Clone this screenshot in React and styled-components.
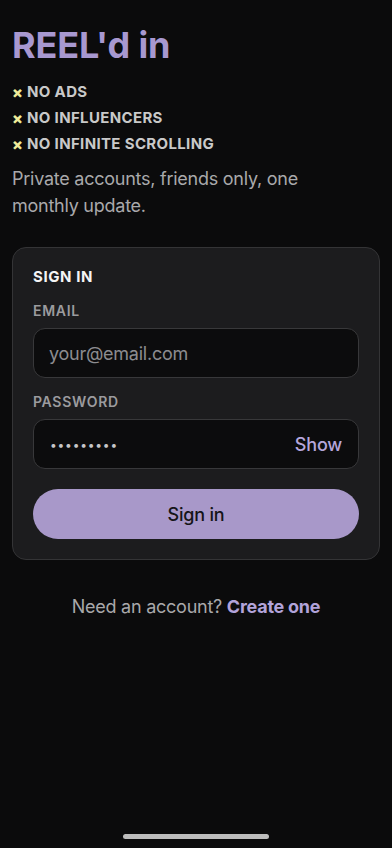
import React, { useState } from 'react'
import styled, { createGlobalStyle } from 'styled-components'

const GlobalStyle = createGlobalStyle`
  html, body {
    margin: 0;
    padding: 0;
    background: #0b0b0c;
  }
  body {
    font-family: Inter, "Noto Sans", "Liberation Sans", sans-serif;
    -webkit-font-smoothing: antialiased;
  }
  * { box-sizing: border-box; }
`

const Page = styled.div`
  min-height: 100vh;
  display: flex;
  flex-direction: column;
  padding: 24px 12px 0;
  background: #0b0b0c;
`

const Title = styled.h1`
  margin: 0;
  font-size: 36px;
  line-height: 43px;
  font-weight: 700;
  letter-spacing: -0.1px;
  color: #a898d0;
`

const NoList = styled.ul`
  list-style: none;
  margin: 12px 0 0;
  padding: 0;
`

const NoItem = styled.li`
  display: flex;
  align-items: center;
  gap: 4px;
  font-size: 15px;
  line-height: 26px;
  font-weight: 700;
  letter-spacing: 0.35px;
  color: #c9c9c9;
`

const Cross = styled.span`
  color: #efec9a;
  font-size: 16px;
  font-weight: 800;
  width: 11px;
`

const Blurb = styled.p`
  margin: 8px 0 0;
  font-size: 18px;
  line-height: 27px;
  letter-spacing: -0.25px;
  color: #a9a9ab;
  padding-right: 70px;
`

const Card = styled.form`
  margin-top: 28px;
  display: flex;
  flex-direction: column;
  padding: 19px 20px 20px;
  background: #1c1c1e;
  border: 1px solid #343436;
  border-radius: 14px;
`

const CardTitle = styled.h2`
  margin: 0 0 14px;
  font-size: 15px;
  line-height: 20px;
  font-weight: 700;
  letter-spacing: 0.6px;
  color: #f4f4f4;
`

const Field = styled.label`
  display: flex;
  flex-direction: column;
  gap: 7px;
  & + & { margin-top: 14px; }
`

const Label = styled.span`
  font-size: 14px;
  line-height: 20px;
  font-weight: 600;
  letter-spacing: 0.7px;
  color: #9b9b9e;
`

const InputBox = styled.div`
  display: flex;
  align-items: center;
  height: 50px;
  padding: 0 16px 0 15px;
  background: #0c0c0d;
  border: 1px solid #38383a;
  border-radius: 12px;
`

const Input = styled.input`
  flex: 1;
  min-width: 0;
  border: none;
  outline: none;
  background: transparent;
  font-family: inherit;
  font-size: ${p => (p.$dots ? '12px' : '18px')};
  color: ${p => (p.$dots ? '#c6c6c8' : '#eaeaea')};
  letter-spacing: ${p => (p.$dots ? '0.8px' : '-0.25px')};
  padding: 0 0 0 ${p => (p.$dots ? '1px' : '0')};
  &::placeholder { color: #8c8c90; }
`

const ShowButton = styled.button`
  border: none;
  background: transparent;
  padding: 0;
  font-family: inherit;
  font-size: 18px;
  font-weight: 500;
  letter-spacing: -0.2px;
  color: #b5a6dc;
  cursor: pointer;
`

const SubmitButton = styled.button`
  margin-top: 20px;
  height: 50px;
  border: none;
  border-radius: 25px;
  background: #a898c9;
  color: #151417;
  font-family: inherit;
  font-size: 18px;
  font-weight: 500;
  letter-spacing: -0.2px;
  cursor: pointer;
`

const Footer = styled.p`
  margin: 33px 0 0;
  text-align: center;
  font-size: 18px;
  line-height: 27px;
  letter-spacing: -0.25px;
  color: #a9a9ab;
`

const FooterLink = styled.a`
  color: #b2a3da;
  font-weight: 700;
  text-decoration: none;
`

const HomeBar = styled.div`
  margin: auto auto 9px;
  width: 146px;
  height: 5px;
  border-radius: 3px;
  background: #bdbdbd;
`

export default function App() {
  const [show, setShow] = useState(false)

  return (
    <>
      <GlobalStyle />
      <Page>
        <Title>REEL'd in</Title>
        <NoList>
          <NoItem><Cross>×</Cross>NO ADS</NoItem>
          <NoItem><Cross>×</Cross>NO INFLUENCERS</NoItem>
          <NoItem><Cross>×</Cross>NO INFINITE SCROLLING</NoItem>
        </NoList>
        <Blurb>Private accounts, friends only, one monthly update.</Blurb>

        <Card onSubmit={e => e.preventDefault()}>
          <CardTitle>SIGN IN</CardTitle>
          <Field>
            <Label>EMAIL</Label>
            <InputBox>
              <Input type="email" placeholder="your@email.com" />
            </InputBox>
          </Field>
          <Field>
            <Label>PASSWORD</Label>
            <InputBox>
              <Input
                $dots={!show}
                type={show ? 'text' : 'password'}
                defaultValue="password1"
              />
              <ShowButton type="button" onClick={() => setShow(!show)}>
                {show ? 'Hide' : 'Show'}
              </ShowButton>
            </InputBox>
          </Field>
          <SubmitButton type="submit">Sign in</SubmitButton>
        </Card>

        <Footer>
          Need an account? <FooterLink href="#">Create one</FooterLink>
        </Footer>

        <HomeBar />
      </Page>
    </>
  )
}
